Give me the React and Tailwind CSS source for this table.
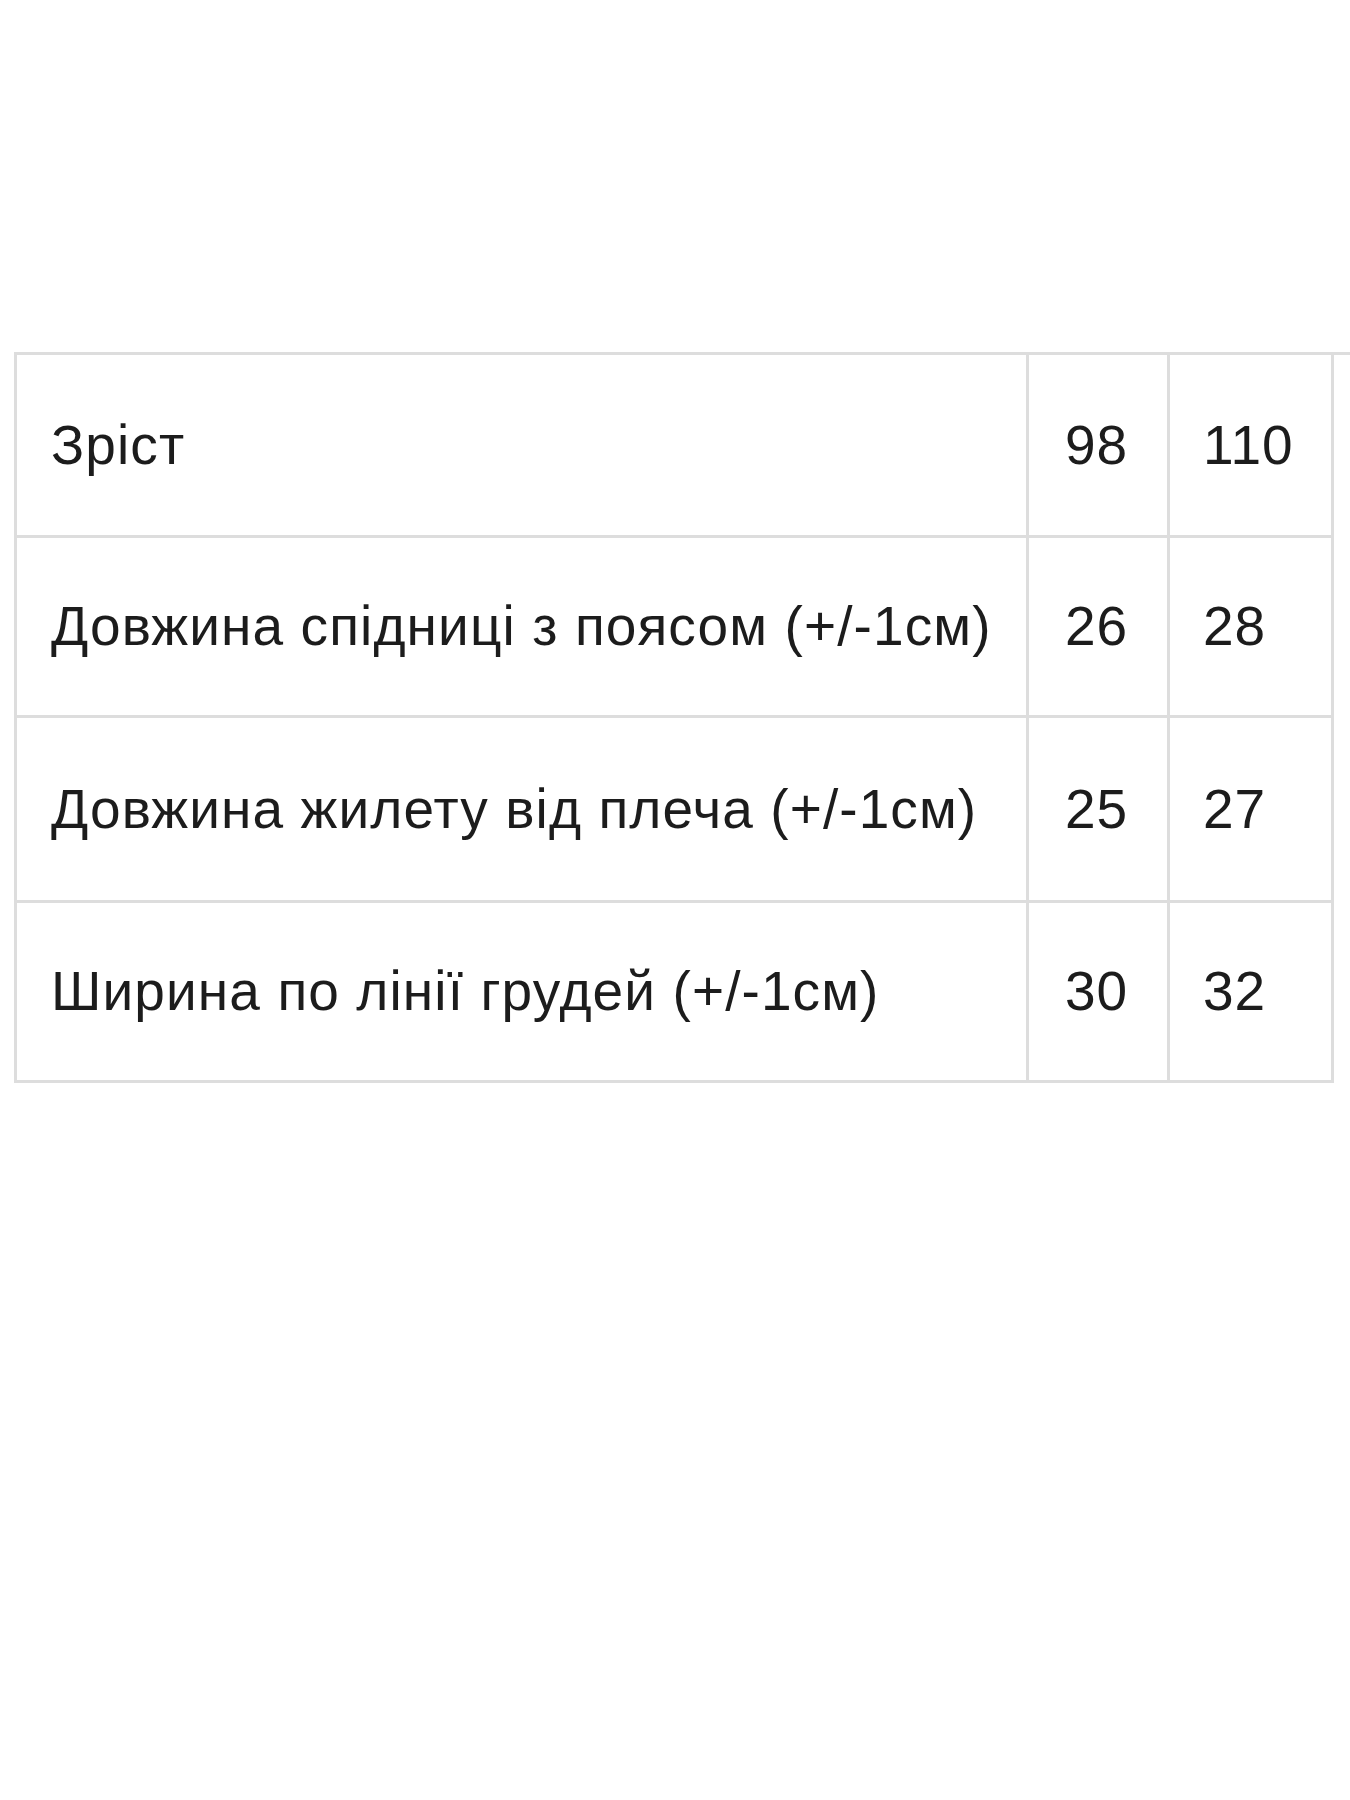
import React from "react";

const rows = [
  { label: "Зріст", a: "98", b: "110", h: "h-[183px]" },
  { label: "Довжина спідниці з поясом (+/-1см)", a: "26", b: "28", h: "h-[180px]" },
  { label: "Довжина жилету від плеча (+/-1см)", a: "25", b: "27", h: "h-[185px]" },
  { label: "Ширина по лінії грудей (+/-1см)", a: "30", b: "32", h: "h-[180px]" },
];

export default function App() {
  return (
    <div
      className="w-[1350px] h-[1800px] bg-white text-[#1c1c1c]"
      style={{ fontFamily: '"Liberation Sans", Arial, sans-serif' }}
    >
      <div className="pt-[352px] pl-[14px]">
        <div className="border-t-[3px] border-[#dddddd] w-[1336px]" />
        <div className="w-[1320px] border-l-[3px] border-r-[3px] border-[#dddddd]">
          {rows.map((r, i) => (
            <div key={i} className={`flex border-b-[3px] border-[#dddddd] ${r.h}`}>
              <div className="w-[1012px] shrink-0 flex items-center pl-[34px] text-[55px] tracking-[1.1px] leading-none border-r-[3px] border-[#dddddd] whitespace-nowrap">
                {r.label}
              </div>
              <div className="w-[141px] shrink-0 flex items-center pl-[36px] text-[55px] tracking-[1px] leading-none border-r-[3px] border-[#dddddd]">
                {r.a}
              </div>
              <div className="flex-1 min-w-0 flex items-center pl-[33px] text-[55px] tracking-[1px] leading-none">
                {r.b}
              </div>
            </div>
          ))}
        </div>
      </div>
    </div>
  );
}
